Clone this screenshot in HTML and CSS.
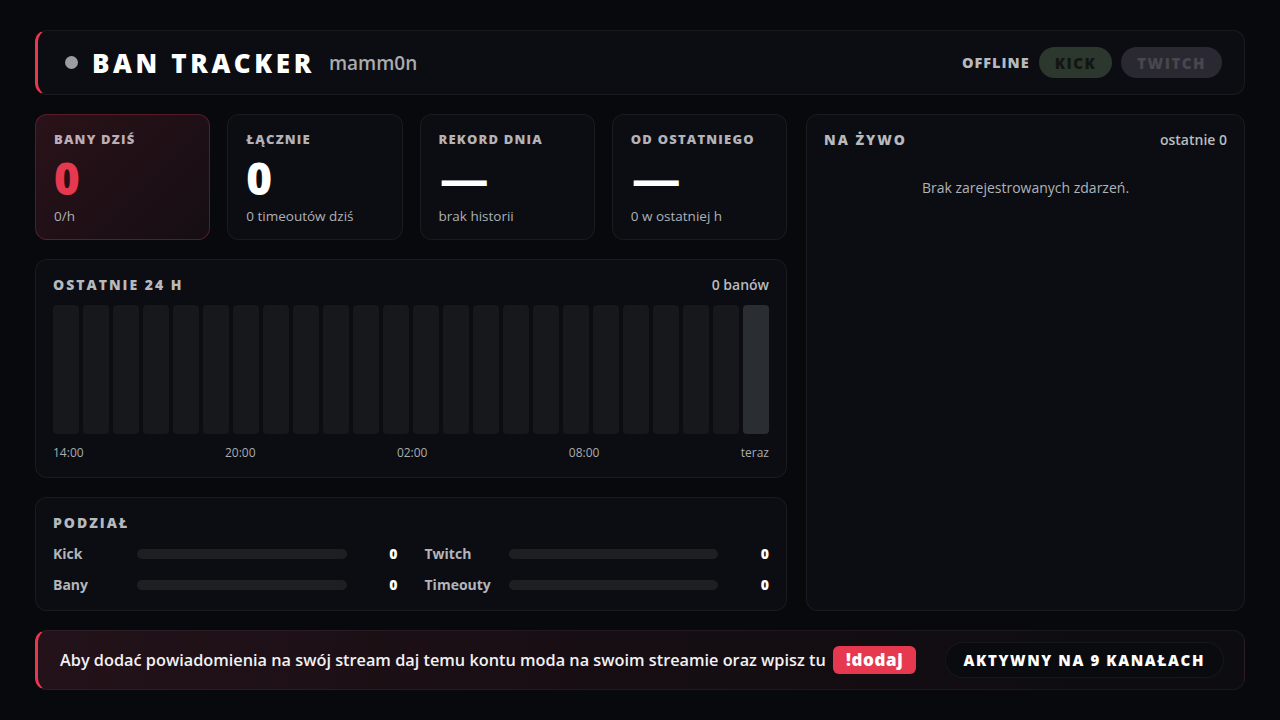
FILE: index.html
```html
<!doctype html>
<html>
    <head>
        <meta charset="utf-8">
        <title>Ban Tracker</title>
        <link rel="stylesheet" href="styles.css">
    </head>
    <body>
        <div id="strona">
            <div class="naglowek">
                <div class="naglowek-lewo">
                    <span class="kropka"></span>
                    <span class="tytul">BAN TRACKER</span>
                    <span class="kanal">mamm0n</span>
                </div>
                <div class="naglowek-prawo">
                    <span class="status">OFFLINE</span>
                    <span class="pigulka kick">KICK</span>
                    <span class="pigulka twitch">TWITCH</span>
                </div>
            </div>

            <div class="siatka">
                <div class="lewa">
                    <div class="karty">
                        <div class="karta karta-glowna">
                            <div class="etykieta">BANY DZIŚ</div>
                            <div class="liczba czerwona">0</div>
                            <div class="opis">0/h</div>
                        </div>
                        <div class="karta">
                            <div class="etykieta">ŁĄCZNIE</div>
                            <div class="liczba">0</div>
                            <div class="opis">0 timeoutów dziś</div>
                        </div>
                        <div class="karta">
                            <div class="etykieta">REKORD DNIA</div>
                            <div class="liczba"><span class="kreska">—</span></div>
                            <div class="opis">brak historii</div>
                        </div>
                        <div class="karta">
                            <div class="etykieta">OD OSTATNIEGO</div>
                            <div class="liczba"><span class="kreska">—</span></div>
                            <div class="opis">0 w ostatniej h</div>
                        </div>
                    </div>

                    <div class="panel wykres">
                        <div class="panel-gora">
                            <div class="panel-tytul">OSTATNIE 24 H</div>
                            <div class="panel-info">0 banów</div>
                        </div>
                        <div class="slupki" id="slupki"></div>
                        <div class="godziny">
                            <span>14:00</span>
                            <span>20:00</span>
                            <span>02:00</span>
                            <span>08:00</span>
                            <span>teraz</span>
                        </div>
                    </div>

                    <div class="panel podzial">
                        <div class="panel-tytul">PODZIAŁ</div>
                        <div class="podzial-siatka">
                            <div class="wiersz">
                                <span class="nazwa">Kick</span>
                                <span class="pasek"></span>
                                <span class="wartosc">0</span>
                            </div>
                            <div class="wiersz">
                                <span class="nazwa">Twitch</span>
                                <span class="pasek"></span>
                                <span class="wartosc">0</span>
                            </div>
                            <div class="wiersz">
                                <span class="nazwa">Bany</span>
                                <span class="pasek"></span>
                                <span class="wartosc">0</span>
                            </div>
                            <div class="wiersz">
                                <span class="nazwa">Timeouty</span>
                                <span class="pasek"></span>
                                <span class="wartosc">0</span>
                            </div>
                        </div>
                    </div>
                </div>

                <div class="panel na-zywo">
                    <div class="panel-gora">
                        <div class="panel-tytul">NA ŻYWO</div>
                        <div class="panel-info">ostatnie 0</div>
                    </div>
                    <div class="pusto">Brak zarejestrowanych zdarzeń.</div>
                </div>
            </div>

            <div class="stopka">
                <div class="stopka-tekst">
                    Aby dodać powiadomienia na swój stream daj temu kontu moda na swoim streamie oraz wpisz tu
                    <span class="komenda">!dodaj</span>
                </div>
                <div class="aktywny">AKTYWNY NA 9 KANAŁACH</div>
            </div>
        </div>
        <script>
            const slupki = document.getElementById("slupki")
            for (let i = 0; i < 24; i++) {
                const s = document.createElement("div")
                s.className = i == 23 ? "slupek teraz" : "slupek"
                slupki.appendChild(s)
            }
        </script>
    </body>
</html>
```

FILE: styles.css
```css
*{
    margin: 0px;
    padding: 0px;
    box-sizing: border-box;
}
body{
    background-color: #07090c;
    font-family: "Open Sans", "Noto Sans", sans-serif;
    color: #e8e9eb;
}
#strona{
    width: 1280px;
    height: 720px;
    padding: 30px 35px;
    display: flex;
    flex-direction: column;
    gap: 19px;
}
.naglowek{
    height: 65px;
    display: flex;
    justify-content: space-between;
    align-items: center;
    padding: 0px 22px 0px 27px;
    background-color: #0b0d12;
    border: 1px solid rgba(255,255,255,0.06);
    border-left: 3px solid #e63950;
    border-radius: 12px;
}
.naglowek-lewo{
    display: flex;
    align-items: center;
}
.kropka{
    width: 13px;
    height: 13px;
    border-radius: 50%;
    background-color: #9b9da1;
    margin-right: 14px;
}
.tytul{
    font-size: 26px;
    font-weight: 800;
    letter-spacing: 3.6px;
    color: #ffffff;
}
.kanal{
    font-size: 19px;
    font-weight: 600;
    color: #a9abaf;
    margin-left: 14px;
}
.naglowek-prawo{
    display: flex;
    align-items: center;
    gap: 9px;
}
.status{
    font-size: 14.5px;
    font-weight: 800;
    letter-spacing: 1px;
    color: #b7babe;
}
.pigulka{
    height: 31px;
    display: flex;
    align-items: center;
    border-radius: 16px;
    font-size: 15px;
    font-weight: 800;
    letter-spacing: 1.5px;
}
.kick{
    padding: 0px 16px;
    background-color: #2c372d;
    color: #121613;
}
.twitch{
    padding: 0px 16px;
    background-color: #2a2830;
    color: #49464f;
}
.siatka{
    height: 497px;
    display: flex;
    gap: 19px;
}
.lewa{
    width: 752px;
    display: flex;
    flex-direction: column;
    gap: 19px;
}
.karty{
    height: 126px;
    display: flex;
    gap: 17px;
}
.karta{
    flex: 1;
    padding: 15px 18px;
    display: flex;
    flex-direction: column;
    background-color: #0b0d12;
    border: 1px solid rgba(255,255,255,0.06);
    border-radius: 12px;
}
.karta-glowna{
    background: linear-gradient(135deg, #2a1219 0%, #150e13 100%);
    border-color: rgba(230,57,80,0.3);
}
.etykieta{
    font-size: 13px;
    font-weight: 800;
    letter-spacing: 1.2px;
    color: #b4b2b7;
}
.karta-glowna .etykieta{
    color: #bcaeb4;
}
.liczba{
    height: 52px;
    font-size: 44px;
    font-weight: 800;
    line-height: 52px;
    color: #ffffff;
    margin-top: 4px;
}
.czerwona{
    color: #e63950;
}
.kreska{
    display: inline-block;
    font-family: "DejaVu Sans", sans-serif;
    font-size: 42px;
    line-height: 52px;
    font-weight: 700;
    transform: scaleX(1.2);
    transform-origin: left center;
}
.opis{
    font-size: 13.5px;
    color: #aeb1b6;
    margin-top: 3px;
}
.panel{
    background-color: #0b0d12;
    border: 1px solid rgba(255,255,255,0.06);
    border-radius: 12px;
    padding: 15px 17px;
}
.panel-gora{
    display: flex;
    justify-content: space-between;
    align-items: center;
}
.panel-tytul{
    font-size: 14px;
    font-weight: 800;
    letter-spacing: 2px;
    color: #b7b9bd;
}
.panel-info{
    font-size: 14px;
    font-weight: 600;
    color: #b9bbbf;
}
.wykres{
    height: 219px;
    display: flex;
    flex-direction: column;
}
.slupki{
    height: 129px;
    margin-top: 11px;
    display: flex;
    gap: 4px;
}
.slupek{
    flex: 1;
    border-radius: 4px;
    background-color: #17181c;
}
.teraz{
    background-color: #2a2d31;
}
.godziny{
    display: flex;
    justify-content: space-between;
    margin-top: 10px;
    font-size: 12px;
    color: #a9acb1;
}
.podzial{
    height: 114px;
}
.podzial-siatka{
    display: grid;
    grid-template-columns: 1fr 1fr;
    column-gap: 27px;
    row-gap: 10px;
    margin-top: 11px;
}
.wiersz{
    display: flex;
    align-items: center;
    height: 21px;
}
.nazwa{
    width: 84px;
    font-size: 14px;
    font-weight: 700;
    color: #b3b5ba;
}
.pasek{
    flex: 1;
    height: 10px;
    border-radius: 5px;
    background-color: #1d1f23;
}
.wartosc{
    width: 51px;
    text-align: right;
    font-size: 14px;
    font-weight: 800;
    color: #ffffff;
}
.na-zywo{
    flex: 1;
    padding: 15px 17px;
}
.pusto{
    text-align: center;
    font-size: 14px;
    color: #b0b3b8;
    margin-top: 29px;
}
.stopka{
    height: 60px;
    display: flex;
    justify-content: space-between;
    align-items: center;
    padding: 0px 20px 0px 22px;
    background: linear-gradient(90deg, #231219 0%, #170e13 45%, #0d0c10 100%);
    border: 1px solid rgba(255,255,255,0.05);
    border-left: 3px solid #e63950;
    border-radius: 12px;
}
.stopka-tekst{
    font-size: 16.3px;
    font-weight: 600;
    color: #f1f1f3;
}
.komenda{
    display: inline-block;
    margin-left: 3px;
    padding: 2px 13px 3px 13px;
    border-radius: 6px;
    background-color: #e63950;
    color: #ffffff;
    font-size: 17px;
    font-weight: 800;
    letter-spacing: 0.6px;
}
.aktywny{
    height: 36px;
    display: flex;
    align-items: center;
    padding: 0px 18px;
    border-radius: 18px;
    background-color: #0a0b0e;
    border: 1px solid rgba(255,255,255,0.05);
    font-size: 15px;
    font-weight: 800;
    letter-spacing: 1.6px;
    color: #ffffff;
}
```
